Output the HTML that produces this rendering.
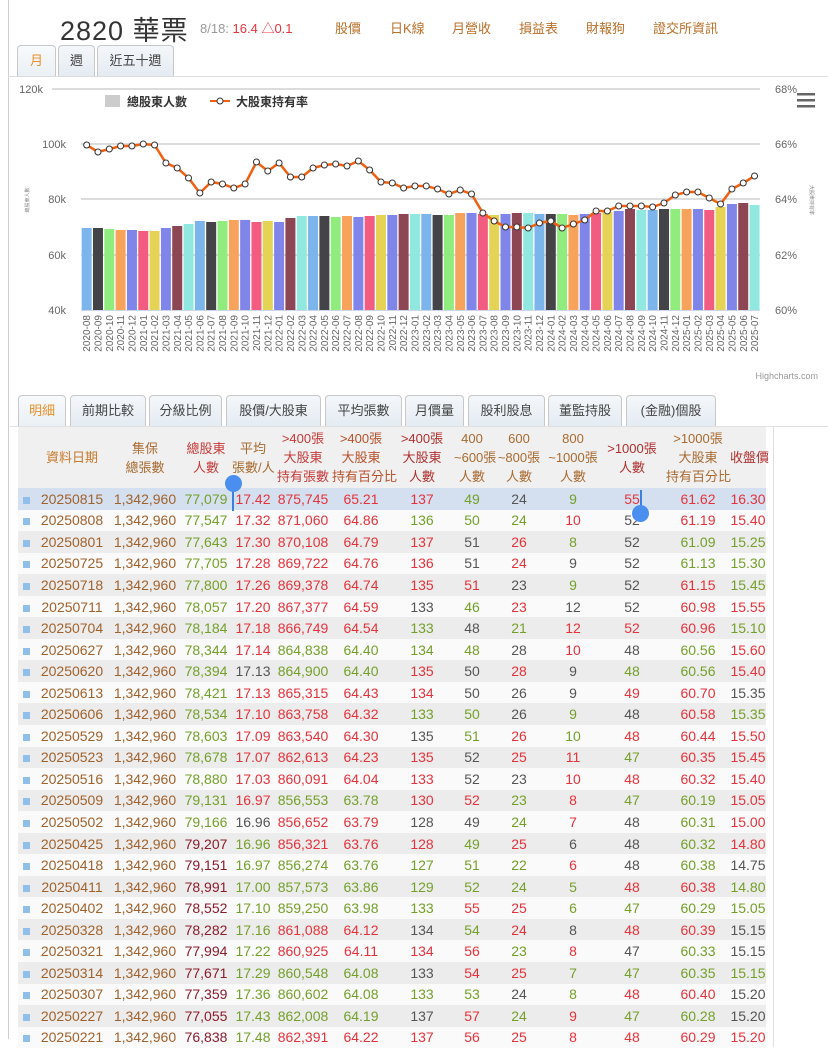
<!DOCTYPE html>
<html><head><meta charset="utf-8"><style>
*{box-sizing:border-box;margin:0;padding:0}
body{width:828px;height:1039px;overflow:hidden;background:#fff;font-family:"Liberation Sans","Noto Sans CJK TC",sans-serif;position:relative}
.abs{position:absolute}
.vline{left:8px;top:0;width:1px;height:1039px;background:#cfcfcf}
.title{left:60px;top:9px;font-size:27px;color:#333;letter-spacing:1px}
.info{top:18px;font-size:13px;color:#999}
.lnk{top:18px;font-size:13px;color:#b8702a}
.tab{position:absolute;height:31px;border:1px solid #c8c8c8;border-bottom:none;border-radius:4px 4px 0 0;background:linear-gradient(#f4f7fa,#e4ebf2);font-size:13px;color:#444;text-align:center;line-height:30px}
.tab.on{color:#e8902a;background:linear-gradient(#f8fafc,#eaf0f5)}
table{border-collapse:collapse;table-layout:fixed;font-size:14px;white-space:nowrap}
td{text-align:center;height:21.55px;padding:0;overflow:visible}
tr.g td{background:#ececec}
tr.w td{background:#fafafa}
tr.s td{background:#d4e0f0}
th{font-weight:normal;font-size:13px;line-height:19px;text-align:center;background:#f0f0f0;color:#a86a30;padding:0}
.mk{display:inline-block;width:7px;height:7px;background:#90c0ea}
.d{color:#a0622d}.r{color:#e5333c}.g{color:#74a02a}.k{color:#555}.m{color:#8b1c2c}
</style></head><body>
<div class="abs vline"></div>
<div class="abs title">2820 華票</div>
<div class="abs info" style="left:200px">8/18: <span style="color:#e5333c">16.4 △0.1</span></div>
<div class="abs lnk" style="left:335px">股價</div>
<div class="abs lnk" style="left:390px">日K線</div>
<div class="abs lnk" style="left:452px">月營收</div>
<div class="abs lnk" style="left:519px">損益表</div>
<div class="abs lnk" style="left:586px">財報狗</div>
<div class="abs lnk" style="left:653px">證交所資訊</div>

<div class="tab on" style="left:17px;top:45px;width:39px">月</div>
<div class="tab" style="left:58px;top:45px;width:37px">週</div>
<div class="tab" style="left:97px;top:45px;width:77px">近五十週</div>
<div class="abs" style="left:8px;top:76px;width:820px;height:1px;background:#dcdcdc"></div>

<svg class="abs" style="left:0;top:0" width="828" height="390" font-family="Liberation Sans, Noto Sans CJK TC, sans-serif">
<g stroke="#d0d0d0" stroke-width="1.5"><line x1="52" y1="89" x2="760" y2="89"/><line x1="81" y1="144" x2="760" y2="144"/><line x1="81" y1="199" x2="760" y2="199"/><line x1="81" y1="255" x2="760" y2="255"/></g>
<line x1="81" y1="310.5" x2="760" y2="310.5" stroke="#ccd6eb"/>
<g id="bars"></g>
<polyline id="ln" fill="none" stroke="#f06010" stroke-width="2.5"/>
<g id="pts" fill="#fff" stroke="#333" stroke-width="1"></g>
<g font-size="11" fill="#666" text-anchor="end"><text x="43" y="93">120k</text><text x="66" y="148">100k</text><text x="66" y="203">80k</text><text x="66" y="259">60k</text><text x="66" y="314">40k</text></g>
<g font-size="11" fill="#666"><text x="775" y="93">68%</text><text x="775" y="148">66%</text><text x="775" y="203">64%</text><text x="775" y="259">62%</text><text x="775" y="314">60%</text></g>
<text font-size="5" fill="#888" transform="translate(29,200) rotate(-90)" text-anchor="middle">總股東人數</text>
<text font-size="5" fill="#888" transform="translate(810,200) rotate(90)" text-anchor="middle">大股東持有率</text>
<rect x="105" y="95" width="15" height="12" fill="#ccc"/>
<text x="127" y="106" font-size="12" font-weight="bold" fill="#333">總股東人數</text>
<line x1="210" y1="101" x2="230" y2="101" stroke="#f06010" stroke-width="2"/><circle cx="220" cy="101" r="3" fill="#fff" stroke="#333"/>
<text x="236" y="106" font-size="12" font-weight="bold" fill="#333">大股東持有率</text>
<g fill="#666"><rect x="797" y="93" width="18" height="2.5"/><rect x="797" y="99" width="18" height="2.5"/><rect x="797" y="105" width="18" height="2.5"/></g>
<text x="818" y="379" font-size="9" fill="#999" text-anchor="end">Highcharts.com</text>
<g font-size="10" fill="#666" text-anchor="end">
<text transform="translate(90.2,315) rotate(-90)">2020-08</text><text transform="translate(101.5,315) rotate(-90)">2020-09</text><text transform="translate(112.8,315) rotate(-90)">2020-10</text><text transform="translate(124.2,315) rotate(-90)">2020-11</text><text transform="translate(135.5,315) rotate(-90)">2020-12</text>
<text transform="translate(146.8,315) rotate(-90)">2021-01</text><text transform="translate(158.1,315) rotate(-90)">2021-02</text><text transform="translate(169.4,315) rotate(-90)">2021-03</text><text transform="translate(180.8,315) rotate(-90)">2021-04</text><text transform="translate(192.1,315) rotate(-90)">2021-05</text><text transform="translate(203.4,315) rotate(-90)">2021-06</text><text transform="translate(214.7,315) rotate(-90)">2021-07</text><text transform="translate(226.0,315) rotate(-90)">2021-08</text><text transform="translate(237.4,315) rotate(-90)">2021-09</text><text transform="translate(248.7,315) rotate(-90)">2021-10</text><text transform="translate(260.0,315) rotate(-90)">2021-11</text><text transform="translate(271.3,315) rotate(-90)">2021-12</text>
<text transform="translate(282.6,315) rotate(-90)">2022-01</text><text transform="translate(294.0,315) rotate(-90)">2022-02</text><text transform="translate(305.3,315) rotate(-90)">2022-03</text><text transform="translate(316.6,315) rotate(-90)">2022-04</text><text transform="translate(327.9,315) rotate(-90)">2022-05</text><text transform="translate(339.2,315) rotate(-90)">2022-06</text><text transform="translate(350.6,315) rotate(-90)">2022-07</text><text transform="translate(361.9,315) rotate(-90)">2022-08</text><text transform="translate(373.2,315) rotate(-90)">2022-09</text><text transform="translate(384.5,315) rotate(-90)">2022-10</text><text transform="translate(395.8,315) rotate(-90)">2022-11</text><text transform="translate(407.2,315) rotate(-90)">2022-12</text>
<text transform="translate(418.5,315) rotate(-90)">2023-01</text><text transform="translate(429.8,315) rotate(-90)">2023-02</text><text transform="translate(441.1,315) rotate(-90)">2023-03</text><text transform="translate(452.4,315) rotate(-90)">2023-04</text><text transform="translate(463.8,315) rotate(-90)">2023-05</text><text transform="translate(475.1,315) rotate(-90)">2023-06</text><text transform="translate(486.4,315) rotate(-90)">2023-07</text><text transform="translate(497.7,315) rotate(-90)">2023-08</text><text transform="translate(509.0,315) rotate(-90)">2023-09</text><text transform="translate(520.4,315) rotate(-90)">2023-10</text><text transform="translate(531.7,315) rotate(-90)">2023-11</text><text transform="translate(543.0,315) rotate(-90)">2023-12</text>
<text transform="translate(554.3,315) rotate(-90)">2024-01</text><text transform="translate(565.6,315) rotate(-90)">2024-02</text><text transform="translate(577.0,315) rotate(-90)">2024-03</text><text transform="translate(588.3,315) rotate(-90)">2024-04</text><text transform="translate(599.6,315) rotate(-90)">2024-05</text><text transform="translate(610.9,315) rotate(-90)">2024-06</text><text transform="translate(622.2,315) rotate(-90)">2024-07</text><text transform="translate(633.6,315) rotate(-90)">2024-08</text><text transform="translate(644.9,315) rotate(-90)">2024-09</text><text transform="translate(656.2,315) rotate(-90)">2024-10</text><text transform="translate(667.5,315) rotate(-90)">2024-11</text><text transform="translate(678.8,315) rotate(-90)">2024-12</text>
<text transform="translate(690.2,315) rotate(-90)">2025-01</text><text transform="translate(701.5,315) rotate(-90)">2025-02</text><text transform="translate(712.8,315) rotate(-90)">2025-03</text><text transform="translate(724.1,315) rotate(-90)">2025-04</text><text transform="translate(735.4,315) rotate(-90)">2025-05</text><text transform="translate(746.8,315) rotate(-90)">2025-06</text><text transform="translate(758.1,315) rotate(-90)">2025-07</text>
</g>
</svg>
<script>
(function(){
var tops=[228,228,229,230,230,231,231,228,226,224,221,222,221,220,220,222,221,222,218,216,216,216,217,216,217,216,215,215,214,214,214,215,215,213,213,214,215,214,213,213,214,214,214,215,214,213,212,211,209,210,210,209,209,209,209,210,207,204,203,205];
var ly=[145,152,149,146,146,144,145,163,168,178,193,182,184,188,184,162,171,163,177,177,168,165,164,166,161,170,182,183,188,186,186,189,194,190,194,213,221,227,227,228,223,221,228,224,220,211,211,206,206,206,207,203,195,192,192,198,204,189,183,176];
var cols=["#7cb5ec","#434348","#90ed7d","#f7a35c","#8085e9","#f15c80","#e4d354","#8085e9","#8d4653","#91e8e1"];
var ns="http://www.w3.org/2000/svg",b=document.getElementById("bars"),p=document.getElementById("pts"),s=[];
for(var i=0;i<60;i++){var cx=81+11.32*(i+0.5);
var r=document.createElementNS(ns,"rect");r.setAttribute("x",cx-5);r.setAttribute("y",tops[i]);r.setAttribute("width",10);r.setAttribute("height",310-tops[i]);r.setAttribute("fill",cols[i%10]);b.appendChild(r);
s.push(cx+","+ly[i]);var c=document.createElementNS(ns,"circle");c.setAttribute("cx",cx);c.setAttribute("cy",ly[i]);c.setAttribute("r",3);p.appendChild(c);}
document.getElementById("ln").setAttribute("points",s.join(" "));
})();
</script>

<div class="tab on" style="left:18px;top:395px;width:48px">明細</div>
<div class="tab" style="left:70px;top:395px;width:76px">前期比較</div>
<div class="tab" style="left:149px;top:395px;width:73px">分級比例</div>
<div class="tab" style="left:226px;top:395px;width:95px">股價/大股東</div>
<div class="tab" style="left:325px;top:395px;width:77px">平均張數</div>
<div class="tab" style="left:405px;top:395px;width:59px">月價量</div>
<div class="tab" style="left:468px;top:395px;width:77px">股利股息</div>
<div class="tab" style="left:548px;top:395px;width:74px">董監持股</div>
<div class="tab" style="left:626px;top:395px;width:90px">(金融)個股</div>
<div class="abs" style="left:10px;top:426px;width:818px;height:1px;background:#e0e0e0"></div>
<div class="abs" style="left:18px;top:427px;width:756px;height:620px;border-right:1px solid #e0e0e0;border-left:1px solid #e0e0e0"></div>

<table class="abs" style="left:18px;top:427px;width:748px">
<colgroup><col style="width:16px"><col style="width:76px"><col style="width:70px"><col style="width:52px"><col style="width:42px"><col style="width:58px"><col style="width:58px"><col style="width:64px"><col style="width:36px"><col style="width:58px"><col style="width:50px"><col style="width:68px"><col style="width:64px"><col style="width:36px"></colgroup>
<tr style="height:61px"><th></th><th style="color:#c8782a">資料日期</th><th>集保<br>總張數</th><th style="color:#c83a3a">總股東<br>人數</th><th>平均<br>張數/人</th><th style="color:#c83a3a">&gt;400張<br>大股東<br>持有張數</th><th style="color:#b8502a">&gt;400張<br>大股東<br>持有百分比</th><th style="color:#b03030">&gt;400張<br>大股東<br>人數</th><th>400<br>~600張<br>人數</th><th>600<br>~800張<br>人數</th><th>800<br>~1000張<br>人數</th><th style="color:#b03030">&gt;1000張<br>人數</th><th>&gt;1000張<br>大股東<br>持有百分比</th><th style="color:#b03030">收盤價</th></tr>
<tr class="s"><td><span class="mk"></span></td><td class="d">20250815</td><td class="d">1,342,960</td><td class="g">77,079</td><td class="r">17.42</td><td class="r">875,745</td><td class="r">65.21</td><td class="r">137</td><td class="g">49</td><td class="k">24</td><td class="g">9</td><td class="r">55</td><td class="r">61.62</td><td class="r">16.30</td></tr>
<tr class="w"><td><span class="mk"></span></td><td class="d">20250808</td><td class="d">1,342,960</td><td class="g">77,547</td><td class="r">17.32</td><td class="r">871,060</td><td class="r">64.86</td><td class="g">136</td><td class="g">50</td><td class="g">24</td><td class="r">10</td><td class="k">52</td><td class="r">61.19</td><td class="r">15.40</td></tr>
<tr class="g"><td><span class="mk"></span></td><td class="d">20250801</td><td class="d">1,342,960</td><td class="g">77,643</td><td class="r">17.30</td><td class="r">870,108</td><td class="r">64.79</td><td class="r">137</td><td class="k">51</td><td class="r">26</td><td class="g">8</td><td class="k">52</td><td class="g">61.09</td><td class="g">15.25</td></tr>
<tr class="w"><td><span class="mk"></span></td><td class="d">20250725</td><td class="d">1,342,960</td><td class="g">77,705</td><td class="r">17.28</td><td class="r">869,722</td><td class="r">64.76</td><td class="r">136</td><td class="k">51</td><td class="r">24</td><td class="k">9</td><td class="k">52</td><td class="g">61.13</td><td class="g">15.30</td></tr>
<tr class="g"><td><span class="mk"></span></td><td class="d">20250718</td><td class="d">1,342,960</td><td class="g">77,800</td><td class="r">17.26</td><td class="r">869,378</td><td class="r">64.74</td><td class="r">135</td><td class="r">51</td><td class="k">23</td><td class="g">9</td><td class="k">52</td><td class="r">61.15</td><td class="g">15.45</td></tr>
<tr class="w"><td><span class="mk"></span></td><td class="d">20250711</td><td class="d">1,342,960</td><td class="g">78,057</td><td class="r">17.20</td><td class="r">867,377</td><td class="r">64.59</td><td class="k">133</td><td class="g">46</td><td class="r">23</td><td class="k">12</td><td class="k">52</td><td class="r">60.98</td><td class="r">15.55</td></tr>
<tr class="g"><td><span class="mk"></span></td><td class="d">20250704</td><td class="d">1,342,960</td><td class="g">78,184</td><td class="r">17.18</td><td class="r">866,749</td><td class="r">64.54</td><td class="g">133</td><td class="k">48</td><td class="g">21</td><td class="r">12</td><td class="r">52</td><td class="r">60.96</td><td class="g">15.10</td></tr>
<tr class="w"><td><span class="mk"></span></td><td class="d">20250627</td><td class="d">1,342,960</td><td class="g">78,344</td><td class="r">17.14</td><td class="g">864,838</td><td class="g">64.40</td><td class="g">134</td><td class="g">48</td><td class="k">28</td><td class="r">10</td><td class="k">48</td><td class="g">60.56</td><td class="r">15.60</td></tr>
<tr class="g"><td><span class="mk"></span></td><td class="d">20250620</td><td class="d">1,342,960</td><td class="g">78,394</td><td class="k">17.13</td><td class="g">864,900</td><td class="g">64.40</td><td class="r">135</td><td class="k">50</td><td class="r">28</td><td class="k">9</td><td class="g">48</td><td class="g">60.56</td><td class="r">15.40</td></tr>
<tr class="w"><td><span class="mk"></span></td><td class="d">20250613</td><td class="d">1,342,960</td><td class="g">78,421</td><td class="r">17.13</td><td class="r">865,315</td><td class="r">64.43</td><td class="r">134</td><td class="k">50</td><td class="k">26</td><td class="k">9</td><td class="r">49</td><td class="r">60.70</td><td class="k">15.35</td></tr>
<tr class="g"><td><span class="mk"></span></td><td class="d">20250606</td><td class="d">1,342,960</td><td class="g">78,534</td><td class="r">17.10</td><td class="r">863,758</td><td class="r">64.32</td><td class="g">133</td><td class="g">50</td><td class="k">26</td><td class="g">9</td><td class="k">48</td><td class="r">60.58</td><td class="g">15.35</td></tr>
<tr class="w"><td><span class="mk"></span></td><td class="d">20250529</td><td class="d">1,342,960</td><td class="g">78,603</td><td class="r">17.09</td><td class="r">863,540</td><td class="r">64.30</td><td class="k">135</td><td class="g">51</td><td class="r">26</td><td class="g">10</td><td class="r">48</td><td class="r">60.44</td><td class="r">15.50</td></tr>
<tr class="g"><td><span class="mk"></span></td><td class="d">20250523</td><td class="d">1,342,960</td><td class="g">78,678</td><td class="r">17.07</td><td class="r">862,613</td><td class="r">64.23</td><td class="r">135</td><td class="k">52</td><td class="r">25</td><td class="r">11</td><td class="g">47</td><td class="r">60.35</td><td class="r">15.45</td></tr>
<tr class="w"><td><span class="mk"></span></td><td class="d">20250516</td><td class="d">1,342,960</td><td class="g">78,880</td><td class="r">17.03</td><td class="r">860,091</td><td class="r">64.04</td><td class="r">133</td><td class="k">52</td><td class="k">23</td><td class="r">10</td><td class="r">48</td><td class="r">60.32</td><td class="r">15.40</td></tr>
<tr class="g"><td><span class="mk"></span></td><td class="d">20250509</td><td class="d">1,342,960</td><td class="g">79,131</td><td class="r">16.97</td><td class="g">856,553</td><td class="g">63.78</td><td class="r">130</td><td class="r">52</td><td class="g">23</td><td class="r">8</td><td class="g">47</td><td class="g">60.19</td><td class="r">15.05</td></tr>
<tr class="w"><td><span class="mk"></span></td><td class="d">20250502</td><td class="d">1,342,960</td><td class="g">79,166</td><td class="k">16.96</td><td class="r">856,652</td><td class="r">63.79</td><td class="k">128</td><td class="k">49</td><td class="g">24</td><td class="r">7</td><td class="k">48</td><td class="g">60.31</td><td class="r">15.00</td></tr>
<tr class="g"><td><span class="mk"></span></td><td class="d">20250425</td><td class="d">1,342,960</td><td class="m">79,207</td><td class="g">16.96</td><td class="r">856,321</td><td class="r">63.76</td><td class="r">128</td><td class="g">49</td><td class="r">25</td><td class="k">6</td><td class="k">48</td><td class="g">60.32</td><td class="r">14.80</td></tr>
<tr class="w"><td><span class="mk"></span></td><td class="d">20250418</td><td class="d">1,342,960</td><td class="m">79,151</td><td class="g">16.97</td><td class="g">856,274</td><td class="g">63.76</td><td class="g">127</td><td class="g">51</td><td class="g">22</td><td class="r">6</td><td class="k">48</td><td class="g">60.38</td><td class="k">14.75</td></tr>
<tr class="g"><td><span class="mk"></span></td><td class="d">20250411</td><td class="d">1,342,960</td><td class="m">78,991</td><td class="g">17.00</td><td class="g">857,573</td><td class="g">63.86</td><td class="g">129</td><td class="g">52</td><td class="g">24</td><td class="g">5</td><td class="r">48</td><td class="r">60.38</td><td class="g">14.80</td></tr>
<tr class="w"><td><span class="mk"></span></td><td class="d">20250402</td><td class="d">1,342,960</td><td class="m">78,552</td><td class="g">17.10</td><td class="g">859,250</td><td class="g">63.98</td><td class="g">133</td><td class="r">55</td><td class="r">25</td><td class="g">6</td><td class="g">47</td><td class="g">60.29</td><td class="g">15.05</td></tr>
<tr class="g"><td><span class="mk"></span></td><td class="d">20250328</td><td class="d">1,342,960</td><td class="m">78,282</td><td class="g">17.16</td><td class="r">861,088</td><td class="r">64.12</td><td class="k">134</td><td class="g">54</td><td class="r">24</td><td class="k">8</td><td class="r">48</td><td class="r">60.39</td><td class="k">15.15</td></tr>
<tr class="w"><td><span class="mk"></span></td><td class="d">20250321</td><td class="d">1,342,960</td><td class="m">77,994</td><td class="g">17.22</td><td class="r">860,925</td><td class="r">64.11</td><td class="r">134</td><td class="r">56</td><td class="g">23</td><td class="r">8</td><td class="k">47</td><td class="g">60.33</td><td class="k">15.15</td></tr>
<tr class="g"><td><span class="mk"></span></td><td class="d">20250314</td><td class="d">1,342,960</td><td class="m">77,671</td><td class="g">17.29</td><td class="g">860,548</td><td class="g">64.08</td><td class="k">133</td><td class="r">54</td><td class="r">25</td><td class="g">7</td><td class="g">47</td><td class="g">60.35</td><td class="g">15.15</td></tr>
<tr class="w"><td><span class="mk"></span></td><td class="d">20250307</td><td class="d">1,342,960</td><td class="m">77,359</td><td class="g">17.36</td><td class="g">860,602</td><td class="g">64.08</td><td class="g">133</td><td class="g">53</td><td class="k">24</td><td class="g">8</td><td class="r">48</td><td class="r">60.40</td><td class="k">15.20</td></tr>
<tr class="g"><td><span class="mk"></span></td><td class="d">20250227</td><td class="d">1,342,960</td><td class="m">77,055</td><td class="g">17.43</td><td class="g">862,008</td><td class="g">64.19</td><td class="k">137</td><td class="r">57</td><td class="g">24</td><td class="r">9</td><td class="g">47</td><td class="g">60.28</td><td class="k">15.20</td></tr>
<tr class="w"><td><span class="mk"></span></td><td class="d">20250221</td><td class="d">1,342,960</td><td class="m">76,838</td><td class="g">17.48</td><td class="r">862,391</td><td class="r">64.22</td><td class="r">137</td><td class="r">56</td><td class="r">25</td><td class="r">8</td><td class="r">48</td><td class="r">60.29</td><td class="r">15.20</td></tr>
</table>

<div class="abs" style="left:232px;top:484px;width:2px;height:27px;background:#3b7fe0"></div>
<div class="abs" style="left:225px;top:475px;width:17px;height:17px;border-radius:50%;background:#4a8ef0"></div>
<div class="abs" style="left:640px;top:490px;width:2px;height:24px;background:#3b7fe0"></div>
<div class="abs" style="left:632px;top:505px;width:17px;height:17px;border-radius:50%;background:#4a8ef0"></div>
</body></html>
